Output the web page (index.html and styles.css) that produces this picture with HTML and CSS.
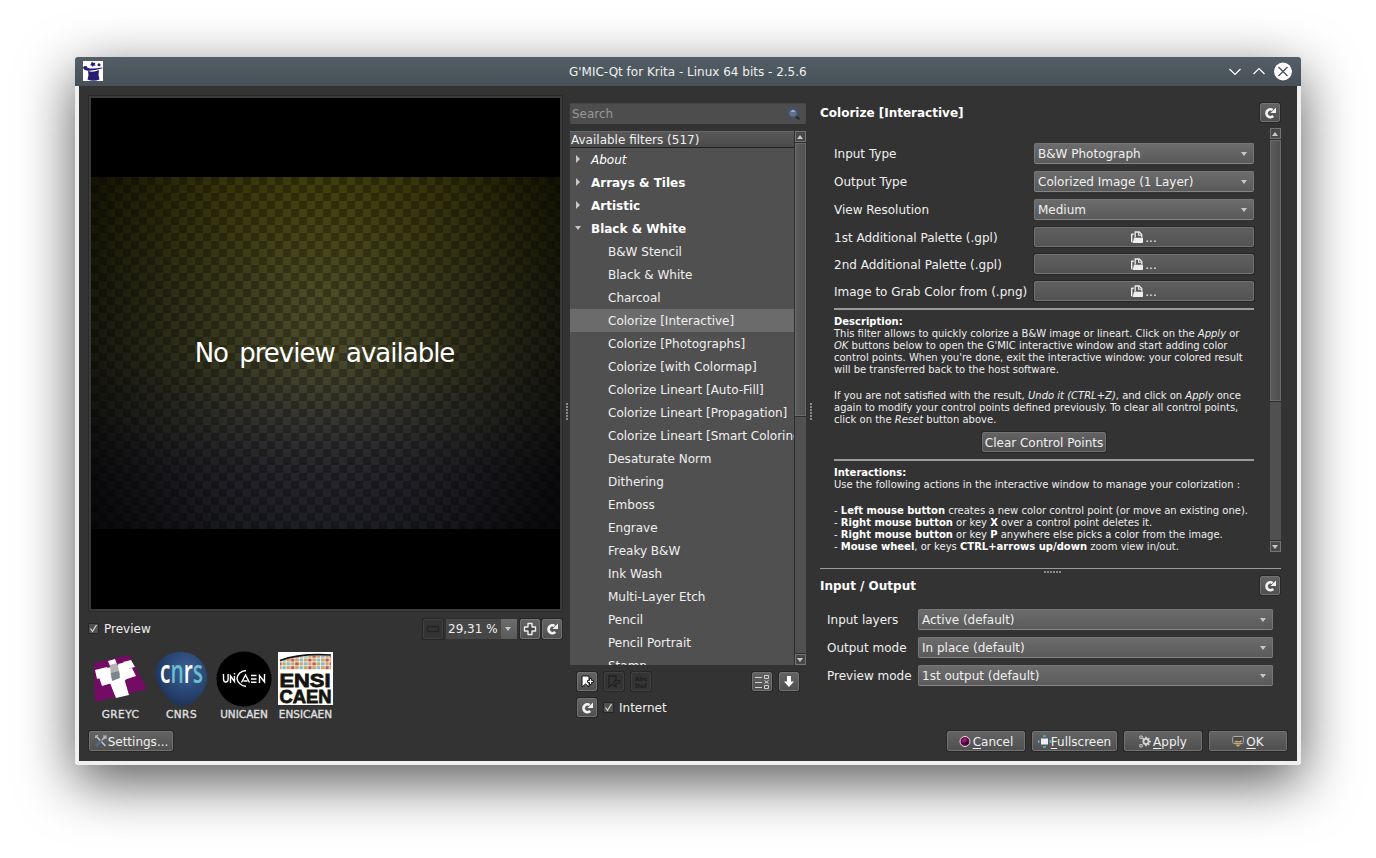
FILE: index.html
```html
<!DOCTYPE html>
<html lang="en">
<head>
<meta charset="utf-8">
<title>G'MIC-Qt for Krita</title>
<link rel="stylesheet" href="styles.css">
</head>
<body>
<svg class="defs" aria-hidden="true">
  <symbol id="i-refresh" viewBox="0 0 12 12"><path d="M9.200 9A3.900 3.900 0 1 1 8.600 3" fill="none" stroke="#f2f2f2" stroke-width="2.700"/><path d="M6.500 6H12V.6z" fill="#f2f2f2"/></symbol>
  <symbol id="i-file" viewBox="0 0 12 12"><path d="M.7 11.300V2.700M.7 3.300h2" stroke="#eee" stroke-width="1.400" fill="none"/><path d="M4.200 6.500V1h4l2.600 2.600v3" fill="none" stroke="#eee" stroke-width="1.300"/><path d="M7.600 1v3.200h3" fill="none" stroke="#eee" stroke-width="1.100"/><path d="M3 6.800h9v4.400q0 .8-.8.8H1.600z" fill="#eee"/></symbol>
</svg>
<div class="window">
  <header class="titlebar">
    <svg class="appicon" width="20" height="20"><path fill="#fff" d="M0 0h20v20H0z"/><path fill="#261c72" d="M5 10q5 2 11-1l-.5 5 1 4.500q-6 2.500-12 0L5.500 14zM0 6.500Q1 4.500 4 5.200q-1 1.600 3 2.300 5 .3 12-1l.6.8Q11 10 5 9.700 0 8.800 0 6.500zM9.500.6l1 1.400 2-.2-.7 1.500.9 1.400-1.800-.1L9.500 6 8.800 4.600 6.900 4.200 8.200 3 8 1.200l1.300.5z"/><circle cx="16" cy="3.800" r="1.500" fill="#261c72"/></svg>
    <span class="title">G'MIC-Qt for Krita - Linux 64 bits - 2.5.6</span>
    <svg class="winbtns" width="68" height="20" fill="none" stroke="#fff" stroke-width="1.200"><path d="M4.500 7l5.500 5.500 5.500-5.500M28.500 12l5.500-5.500 5.500 5.500"/><circle cx="58" cy="9.500" r="9" fill="#fff" stroke="none"/><path d="M53.500 5l9 9M62.500 5l-9 9" stroke="#475057" stroke-width="1.300"/></svg>
  </header>
  <main class="body">
    <div class="columns">
      <section class="col-preview">
        <div class="frame"><div class="canvas"><div class="image"><span>No preview available</span></div></div></div>
        <div class="previewbar">
          <span class="check"><svg width="9" height="9"><path d="M1.500 4.500l2 3L7.500 1" fill="none" stroke="#ddd" stroke-width="1.200"/></svg></span><span class="grow">Preview</span>
          <span class="btn tool off"><svg width="14" height="8"><rect x="1.500" y="1.500" width="11" height="5" rx="1" fill="none" stroke="#242424" stroke-width="1.500"/></svg></span>
          <span class="zoom"><span class="zoomval">29,31 %</span><span class="zoomarrow"><i class="tri"></i></span></span>
          <span class="btn tool"><svg width="14" height="14"><path d="M5 1.500h4V5h3.500v4H9v3.500H5V9H1.500V5H5z" fill="#444" stroke="#eee" stroke-width="1.400" stroke-linejoin="round"/></svg></span>
          <span class="btn tool last"><svg width="12" height="12"><use href="#i-refresh"/></svg></span>
        </div>
        <div class="logos">
          <div class="logo"><svg width="55" height="56" viewBox="0 0 55 56"><path fill="#740b64" d="M1 12L36 4l18 34L2 51z"/><path fill="#fff" d="M15 10l7-2 2 5-7 2zM30 11l8-2 4 7-8 2zM2 19l12-3 3 8-13 4zM6 26l10-3 3 9-10 3zM25 13l8-2 3 7-8 2zM27 20l12-3 4 8-12 4zM14 17l12-3 7 15-15 5zM17 32l14-5 5 17-13 3z"/><path fill="#b6b2b4" d="M17 14l7-2 3 12-9 3z"/><path fill="#7b858f" d="M18 22l8-2 1 7-8 3z"/></svg><span class="wide">GREYC</span></div>
          <div class="logo"><svg width="55" height="56" viewBox="0 0 55 56"><defs><radialGradient id="gc" cx=".6" cy=".35" r=".7"><stop offset="0" stop-color="#3c6298"/><stop offset="1" stop-color="#1b3157"/></radialGradient></defs><path fill="url(#gc)" d="M24 1Q41 0 49 13q9 15-1 29-8 12-20 13-10-1-20-15-9-14-6-23Q7 3 24 1z"/><text class="cnrs" x="6" y="32" textLength="43" lengthAdjust="spacingAndGlyphs"><tspan fill="#fff">c</tspan><tspan fill="#68bdce">n</tspan><tspan fill="#fff">r</tspan><tspan fill="#68bdce">s</tspan></text></svg><span class="wide">CNRS</span></div>
          <div class="logo logo-uni"><svg width="56" height="56" viewBox="0 0 56 56"><circle cx="28" cy="28" r="27.500"/><g fill="none" stroke="#fff" stroke-width="1.400"><path d="M7.500 23v5q0 3 2.300 3t2.300-3v-5M14.500 32v-7l4 5.500V25M18.500 22v1.500M30 19.500q-8 1-9 8 1 6.500 9 8M25.500 31.500l4-7.500 4 7.500M27.500 30h4M35 24.500h5.500M35 28h5.500M35 31.300h5.500M43.500 32v-7.500l5 6.500v-8"/></g></svg><span>UNICAEN</span></div>
          <div class="logo"><svg width="55" height="56" viewBox="0 0 55 56"><defs><pattern id="pm" width="17.200" height="7.600" patternUnits="userSpaceOnUse"><path fill="#fff" d="M0 0h18v8H0z"/><path fill="#d5a15c" d="M0 0h3.600v3H0zM8.600 0h3.600v3H8.600zM4.300 3.800h3.600v3H4.300zM12.900 3.800h3.600v3h-3.600z"/><path fill="#7fc0cd" d="M4.300 0h3.600v3H4.300zM8.600 3.800h3.600v3H8.600z"/><path fill="#b3605c" d="M0 3.800h3.600v3H0zM12.900 0h3.600v3h-3.600z"/></pattern></defs><path fill="#fff" d="M0 1h55v53H0z"/><path fill="url(#pm)" d="M2 10Q20 4 53 5v14H2z"/><path d="M2 9.500Q22 2 53 4" fill="none" stroke="#111" stroke-width="1.600"/><text class="ensi" x="1.500" y="36" textLength="51" lengthAdjust="spacingAndGlyphs">ENSI</text><text class="ensi" x="1.500" y="52" textLength="52" lengthAdjust="spacingAndGlyphs">CAEN</text></svg><span>ENSICAEN</span></div>
        </div>
      </section>
      <div class="split s1"><i class="grip"></i></div>
      <section class="col-filters">
        <div class="search"><span>Search</span><svg width="14" height="14"><path d="M8.500 9.500l4 2.500" stroke="#2c2c2c" stroke-width="2.500"/><circle cx="6" cy="6" r="4.300" fill="#68707b" stroke="#34568c" stroke-width="1.500"/><path d="M4.500 4.500q1.500-1.500 3 0" stroke="#dfe5ee" fill="none"/></svg></div>
        <div class="tree">
          <div class="treemain">
            <div class="treehead">Available filters (517)</div>
            <ul>
              <li class="cat it"><i class="right"></i>About</li>
              <li class="cat"><i class="right"></i>Arrays &amp; Tiles</li>
              <li class="cat"><i class="right"></i>Artistic</li>
              <li class="cat"><i class="tri"></i>Black &amp; White</li>
              <li>B&amp;W Stencil</li>
              <li>Black &amp; White</li>
              <li>Charcoal</li>
              <li class="sel">Colorize [Interactive]</li>
              <li>Colorize [Photographs]</li>
              <li>Colorize [with Colormap]</li>
              <li>Colorize Lineart [Auto-Fill]</li>
              <li>Colorize Lineart [Propagation]</li>
              <li>Colorize Lineart [Smart Coloring]</li>
              <li>Desaturate Norm</li>
              <li>Dithering</li>
              <li>Emboss</li>
              <li>Engrave</li>
              <li>Freaky B&amp;W</li>
              <li>Ink Wash</li>
              <li>Multi-Layer Etch</li>
              <li>Pencil</li>
              <li>Pencil Portrait</li>
              <li>Stamp</li>
            </ul>
          </div>
          <div class="scroll"><b><i class="up"></i></b><div class="thumb t1"></div><div class="track"></div><b><i class="tri"></i></b></div>
        </div>
        <div class="toolrow">
          <span class="btn tool"><svg width="14" height="14"><path d="M2 1h7v11L5.500 9 2 12z" fill="#fff" stroke="#111"/><path d="M7.500 5.500h2v-2h2v2h2v2h-2v2h-2v-2h-2z" fill="#fff" stroke="#111" stroke-width=".9"/></svg></span>
          <span class="btn tool off"><svg width="14" height="14"><path d="M2 1h7v11L5.500 9 2 12z" fill="#343434" stroke="#202020" stroke-width="1.300"/><path d="M7 5.500h6V8H7z" fill="#343434" stroke="#202020"/></svg></span>
          <span class="btn tool off"><svg width="14" height="14"><text class="abc" x="1" y="6">Abc</text><text class="abc" x="1" y="13">Def</text></svg></span>
          <span class="grow"></span>
          <span class="btn tool"><svg width="16" height="16" fill="none" stroke="#d0d0d0"><path d="M1 3.500h7M1 8.500h7M1 13.500h7" stroke-width="1.200"/><path d="M10.500 1.500h4v3h-4zM10.500 6.500l4 3M14.500 6.500l-4 3M10.500 11.500h4v3h-4z"/></svg></span>
          <span class="btn tool"><svg width="12" height="12"><path d="M4 0h4v5.500h3L6 11 1 5.500h3z" fill="#fff"/></svg></span>
        </div>
        <div class="netrow">
          <span class="btn tool"><svg width="12" height="12"><use href="#i-refresh"/></svg></span>
          <span class="check"><svg width="9" height="9"><path d="M1.500 4.500l2 3L7.500 1" fill="none" stroke="#ddd" stroke-width="1.200"/></svg></span><span class="netlabel">Internet</span>
        </div>
      </section>
      <div class="split s2"><i class="grip"></i></div>
      <section class="col-params">
        <div class="head"><h2>Colorize [Interactive]</h2><span class="btn tool"><svg width="12" height="12"><use href="#i-refresh"/></svg></span></div>
        <div class="params">
          <div class="paramlist">
            <div class="row"><label>Input Type</label><span class="combo">B&amp;W Photograph<i class="tri"></i></span></div>
            <div class="row"><label>Output Type</label><span class="combo">Colorized Image (1 Layer)<i class="tri"></i></span></div>
            <div class="row"><label>View Resolution</label><span class="combo">Medium<i class="tri"></i></span></div>
            <div class="row file"><label>1st Additional Palette (.gpl)</label><span class="btn"><svg width="12" height="12"><use href="#i-file"/></svg>...</span></div>
            <div class="row file"><label>2nd Additional Palette (.gpl)</label><span class="btn"><svg width="12" height="12"><use href="#i-file"/></svg>...</span></div>
            <div class="row file"><label>Image to Grab Color from (.png)</label><span class="btn"><svg width="12" height="12"><use href="#i-file"/></svg>...</span></div>
            <div class="rule"></div>
            <div class="note first"><b>Description:</b><br>This filter allows to quickly colorize a B&amp;W image or lineart. Click on the <em>Apply</em> or<br><em>OK</em> buttons below to open the G'MIC interactive window and start adding color<br>control points. When you're done, exit the interactive window: your colored result<br>will be transferred back to the host software.</div>
            <div class="note">If you are not satisfied with the result, <em>Undo it (CTRL+Z)</em>, and click on <em>Apply</em> once<br>again to modify your control points defined previously. To clear all control points,<br>click on the <em>Reset</em> button above.</div>
            <span class="btn clear">Clear Control Points</span>
            <div class="rule"></div>
            <div class="note first"><b>Interactions:</b><br>Use the following actions in the interactive window to manage your colorization :</div>
            <div class="note">- <b>Left mouse button</b> creates a new color control point (or move an existing one).<br>- <b>Right mouse button</b> or key <b>X</b> over a control point deletes it.<br>- <b>Right mouse button</b> or key <b>P</b> anywhere else picks a color from the image.<br>- <b>Mouse wheel</b>, or keys <b>CTRL+arrows up/down</b> zoom view in/out.</div>
          </div>
          <div class="scroll"><b><i class="up"></i></b><div class="thumb t2"></div><div class="track"></div><b><i class="tri"></i></b></div>
        </div>
        <div class="hsplit"><i class="grip h"></i></div>
        <div class="head io"><h2>Input / Output</h2><span class="btn tool"><svg width="12" height="12"><use href="#i-refresh"/></svg></span></div>
        <div class="iolist">
          <div class="row"><label>Input layers</label><span class="combo">Active (default)<i class="tri"></i></span></div>
          <div class="row"><label>Output mode</label><span class="combo">In place (default)<i class="tri"></i></span></div>
          <div class="row"><label>Preview mode</label><span class="combo">1st output (default)<i class="tri"></i></span></div>
        </div>
      </section>
    </div>
    <footer class="footer">
      <span class="btn set"><svg width="14" height="14"><path d="M1.500 1.500l10 10.500" stroke="#c8c8c8" stroke-width="1.500"/><path d="M12.500 1.500L8 6" stroke="#bbb" stroke-width="1.400"/><path d="M7 7l-5 5" stroke="#50698e" stroke-width="2.500"/><path d="M1 4l3-3M10 1v3h3" stroke="#c8c8c8" fill="none"/></svg>Settings...</span>
      <span class="grow"></span>
      <span class="btn w78"><svg width="12" height="13"><circle cx="6" cy="6.500" r="5" fill="#5d0b4c" stroke="#f0dcd8"/><path d="M3 7q0-3 3-4 2 0 2 2-1 2-3 2z" fill="#8c2a79"/><circle cx="7.500" cy="8" r="1.500" fill="#31062a"/></svg><span><u>C</u>ancel</span></span>
      <span class="btn w85"><svg width="13" height="13"><path d="M3 3.500h7v6H3z" fill="#eee"/><path d="M5 1h3M5 12h3M.7 5v3M12.300 5v3" stroke="#55b5e0" stroke-width="1.300"/></svg><span><u>F</u>ullscreen</span></span>
      <span class="btn w78"><svg width="12" height="13" fill="none" stroke="#d5d5d5"><circle cx="7" cy="6.500" r="2.600" stroke-width="1.900"/><path d="M7 1.800v2M7 9.300v2M10 6.500h2M3.700 3.200l1.400 1.400M10.300 3.200L8.900 4.600M8.900 8.400l1.400 1.400" stroke-width="1.700"/><path d="M.8 1h2.400v2.400H.8zM.8 9.600h2.400V12H.8z" stroke-width=".9"/></svg><span><u>A</u>pply</span></span>
      <span class="btn w78"><svg width="12" height="13"><rect x=".7" y="1.500" width="10.600" height="7" rx="1" fill="#4b4b4b" stroke="#aaa"/><path d="M2.500 6.500l2-1 2 1 3-1.500v2.500h-7z" fill="#dca75b"/><path d="M3.200 9.500h5.600L6 12z" fill="#dca75b"/></svg><span><u>O</u>K</span></span>
    </footer>
  </main>
</div>
</body>
</html>
```
FILE: styles.css
```css
* { box-sizing: border-box; }
body { margin: 0; padding: 57px 75px; background: #fff; height: 858px; overflow: hidden; font: 12px/15px "DejaVu Sans", sans-serif; color: #f0f0f0; white-space: nowrap; }
.defs { display: none; }
svg { flex: none; display: block; }
.window { width: 1226px; height: 708px; border-radius: 3px; overflow: hidden; background: #eff0f0; box-shadow: 0 17px 56px rgba(0,0,0,.66); display: flex; flex-direction: column; }
.titlebar { height: 29px; background: linear-gradient(#535e66, #475057); display: flex; align-items: center; padding: 0 8px 1px; flex: none; }
.appicon { margin-right: 466px; }
.title { flex: 1; padding-top: 3px; }
.winbtns { margin-top: 1px; }
.body { margin: 0 4px; width: 1218px; height: 675px; background: #333; padding: 9px 10px 0 9px; flex: none; }
.columns { display: flex; height: 636px; }
.grow { flex: 1; }

.btn { display: inline-flex; align-items: center; justify-content: center; height: 20px; padding-top: 2px; background: linear-gradient(#636363, #505050); border: 1px solid #727272; border-radius: 2px; box-shadow: 0 0 0 1px #272727; flex: none; }
.btn svg { margin-top: -2px; }
.btn.tool { width: 20px; padding-top: 0; }
.btn.tool svg { margin-top: 0; }
.btn.off { background: #343434; border-color: #404040; }
.check { width: 11px; height: 11px; background: #505050; border: 1px solid #25272d; display: flex; align-items: center; justify-content: center; flex: none; }
i { display: block; flex: none; }
.tri { border: 3.500px solid transparent; border-top: 4px solid #c8c8c8; border-bottom: 0; }
.up { border: 3.500px solid transparent; border-bottom: 4px solid #c8c8c8; border-top: 0; }
.right { border: 4px solid transparent; border-left: 4px solid #c8c8c8; border-right: 0; }

.col-preview { width: 475px; }
.frame { height: 517px; border: 1px solid #2a2a28; padding: 2px; background: #3a3a3a; }
.canvas { height: 511px; background: #000; padding-top: 79px; }
.image { height: 352px; display: flex; align-items: center; justify-content: center; font-size: 26px; letter-spacing: -1px; word-spacing: 4px; color: #fff; padding-right: 2px;
  background:
    radial-gradient(ellipse 265px 350px at 50% 42%, transparent 10%, rgba(0,0,0,.42) 60%, rgba(0,0,0,.8) 100%),
    repeating-conic-gradient(rgba(0,0,0,.28) 0 25%, transparent 0 50%) 0 0 / 16px 16px,
    linear-gradient(#54520e 0, #4a4a24 32%, #484829 50%, #3f3f38 68%, #33333c 84%, #31323b 100%); }
.previewbar { display: flex; align-items: center; height: 21px; margin-top: 6px; padding: 1px 1px 0 0; }
.previewbar .check { margin-top: -1px; }
.previewbar .grow { padding-left: 5px; }
.zoom { display: flex; width: 71px; height: 20px; margin: 0 3px; }
.zoomval { width: 55px; padding: 3px 0 0 2px; background: #464646; }
.zoomarrow { width: 16px; background: linear-gradient(#6c6c6c, #5a5a5a); display: flex; align-items: center; padding-left: 4px; }
.last { margin-left: 2px; }
.logos { display: flex; gap: 6px; margin: 12px 0 0 5px; }
.logo { width: 55px; display: flex; flex-direction: column; align-items: center; font-size: 10.500px; line-height: 14px; color: #dedede; -webkit-text-stroke: .4px #dedede; }
.logo svg { -webkit-text-stroke: 0; }
.logo-uni { width: 56px; margin-left: 1px; }
.wide { letter-spacing: .5px; }
.cnrs { font: 600 33px "Open Sans", sans-serif; }
.ensi { font: bold 18px "Liberation Sans", sans-serif; fill: #15150f; stroke: #15150f; stroke-width: .8px; }
.abc { font: bold 6px "DejaVu Sans", sans-serif; fill: #202020; }

.split { padding-top: 308px; flex: none; }
.s1 { width: 7px; padding-left: 3px; }
.s2 { width: 14px; padding-left: 4px; }
.grip { width: 2px; height: 17px; background: repeating-linear-gradient(#8a8a8a 0 2px, transparent 2px 3px); }
.grip.h { width: 17px; height: 2px; background: repeating-linear-gradient(90deg, #8a8a8a 0 2px, transparent 2px 3px); }

.col-filters { width: 236px; padding-top: 8px; }
.search { height: 21px; background: #4d4d4d; border-top: 1px solid #444; border-radius: 1px; display: flex; align-items: center; justify-content: space-between; padding: 0 5px 0 2px; color: #989898; }
.tree { display: flex; height: 534px; margin-top: 7px; background: #505050; }
.treemain { width: 224px; height: 534px; overflow: hidden; }
.treehead { height: 17px; border-top: 1px solid #686868; border-bottom: 1px solid #222; background: linear-gradient(#585858, #4a4a4a); padding: 0 1px; line-height: 16px; }
ul { list-style: none; margin: 0; padding: 0; }
li { height: 23px; line-height: 25px; padding-left: 38px; }
.cat { display: flex; align-items: center; padding: 2px 0 0 5px; font-weight: bold; color: #fff; }
.cat i { margin: -3px 10px 0 0; }
.cat .right { margin: -3px 11px 0 1px; }
.cat.it { font-weight: normal; font-style: italic; }
.sel { background: #6b6b6b; }
.scroll { width: 11px; display: flex; flex-direction: column; background: #505050; flex: none; }
.tree .scroll { width: 12px; border-left: 1px solid #2d2d2d; }
.scroll b { height: 11px; border: 1px solid #747474; background: #484848; display: flex; align-items: center; padding-left: 1px; flex: none; }
.thumb { border: 1px solid #6b6b6b; background: linear-gradient(90deg, #5b5b5b, #505050); margin: 1px 0; box-shadow: 0 0 0 1px #2e2e2e; flex: none; }
.t1 { height: 273px; }
.t2 { height: 261px; }
.track { flex: 1; border-bottom: 1px solid #2e2e2e; }
.toolrow { display: flex; gap: 7px; margin-top: 7px; padding: 0 7px; }
.toolrow .btn, .netrow .btn { height: 19px; }
.netrow { display: flex; align-items: center; margin-top: 7px; padding-left: 7px; }
.netrow .check { margin: 0 5px 0 6px; }
.netlabel { padding-top: 2px; }

.col-params { width: 461px; padding-top: 8px; }
.head { display: flex; align-items: center; justify-content: space-between; height: 19px; padding-right: 1px; }
.head .btn { height: 19px; }
h2 { font-size: 12px; margin: 0; padding-top: 2px; color: #fff; }
.params { height: 424px; margin-top: 6px; display: flex; }
.paramlist { width: 450px; padding: 15px 16px 0 14px; display: flex; flex-direction: column; }
.row { display: flex; align-items: center; height: 21px; margin-bottom: 7px; flex: none; }
.row label { width: 200px; padding-top: 2px; }
.row.file { height: 20px; }
.combo { flex: 1; height: 21px; display: flex; align-items: center; justify-content: space-between; padding: 2px 6px 0 3px; background: linear-gradient(#6c6c6c, #5a5a5a); border: 1px solid #767676; border-bottom-color: #858585; border-radius: 2px; }
.combo i { margin-top: -2px; }
.file .btn { flex: 1; gap: 2px; background: linear-gradient(#5f5f5f, #535353); }
.rule { height: 2px; background: #9a9a9a; flex: none; }
.note { font-size: 10px; line-height: 12px; color: #eee; margin-bottom: 14px; }
.note b { color: #fff; }
.note.first { padding-top: 6px; }
.clear { width: 124px; align-self: center; margin: -8px 0 7px; }
.hsplit { border-top: 1px solid #9a9a9a; margin-top: 16px; height: 8px; padding: 2px 0 0 224px; }
.iolist { padding: 14px 8px 0 7px; }
.iolist label { width: 91px; }
.footer { display: flex; gap: 7px; padding-left: 1px; }
.set { width: 84px; }
.w78 { width: 78px; gap: 2px; }
.w85 { width: 85px; }
u { text-underline-offset: 2px; }
```
